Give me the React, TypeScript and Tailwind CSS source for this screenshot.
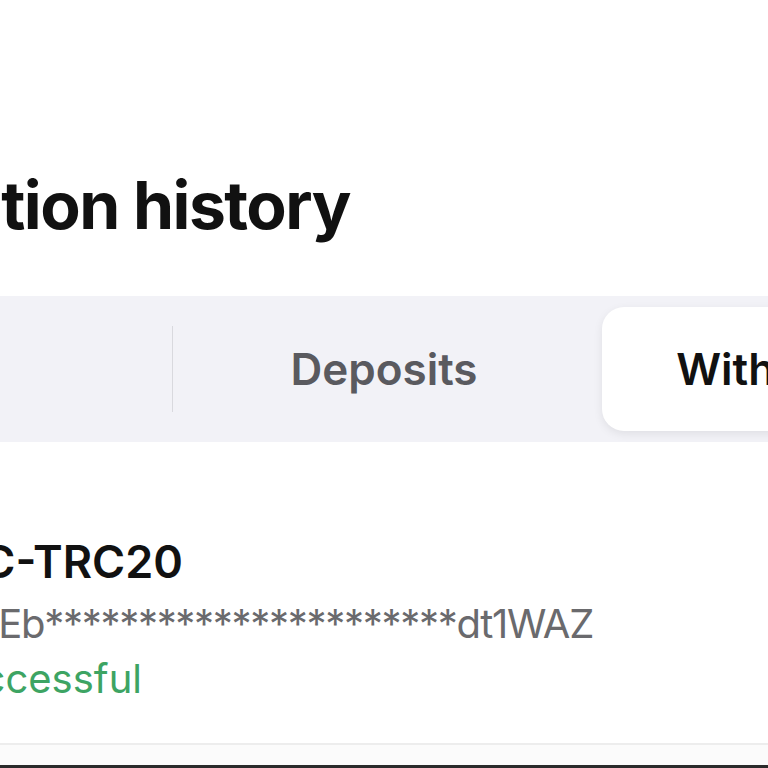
import React from "react"

const tabs = [
    { label: "All", active: false },
    { label: "Deposits", active: false },
    { label: "Withdrawals", active: true },
]

// pins a line's right edge; whatever doesn't fit runs off to the left
const Line = ({ right, className, children }: { right: string, className: string, children: React.ReactNode }) => (
    <div className={`flex justify-end ${right}`}>
        <span className={`shrink-0 whitespace-nowrap leading-none ${className}`}>{children}</span>
    </div>
)

export default function App() {
    return (
        <div className="w-[768px] h-[768px] overflow-hidden bg-white flex flex-col font-['Inter','Liberation_Sans',sans-serif]">
            <div className="pt-[172px]">
                <Line right="w-[350px]" className="text-[66px] font-bold text-[#111111] tracking-[-1.5px]">
                    Transaction history
                </Line>
            </div>

            <div className="mt-[58px] h-[146px] bg-[#f2f2f7] flex items-center">
                <div className="-ml-[250px] flex items-center shrink-0">
                    {tabs.map((tab, i) => (
                        <React.Fragment key={tab.label}>
                            {i === 1 && <div className="w-px h-[86px] bg-[#d9d9de] shrink-0" />}
                            <div className="w-[422px] h-[124px] shrink-0 flex">
                                <div className={tab.active
                                    ? "flex-1 ml-[7px] rounded-[22px] bg-white shadow-[0_3px_10px_rgba(0,0,0,0.08)] flex items-center justify-center"
                                    : "flex-1 flex items-center justify-center"}>
                                    <span className={tab.active
                                        ? "text-[44px] font-semibold text-[#111111] leading-none"
                                        : "text-[44px] font-semibold text-[#5a5a5f] leading-none"}>
                                        {tab.label}
                                    </span>
                                </div>
                            </div>
                        </React.Fragment>
                    ))}
                </div>
            </div>

            <div className="pt-[97px] flex flex-col">
                <Line right="w-[183px]" className="text-[45px] font-semibold text-[#111111]">
                    USDC-TRC20
                </Line>
                <Line right="w-[593px] mt-[20px]" className="text-[40px] font-normal text-[#6a6a6d] tracking-[-1.3px]">
                    TQ5Eb**********************dt1WAZ
                </Line>
                <Line right="w-[142px] mt-[15px]" className="text-[40px] font-normal text-[#3da463]">
                    Successful
                </Line>
            </div>

            <div className="mt-[auto] h-[25px] border-t-2 border-[#ededed] bg-[#fbfbfb] border-b-[3px] border-b-[#2b2b2b]" />
        </div>
    )
}
